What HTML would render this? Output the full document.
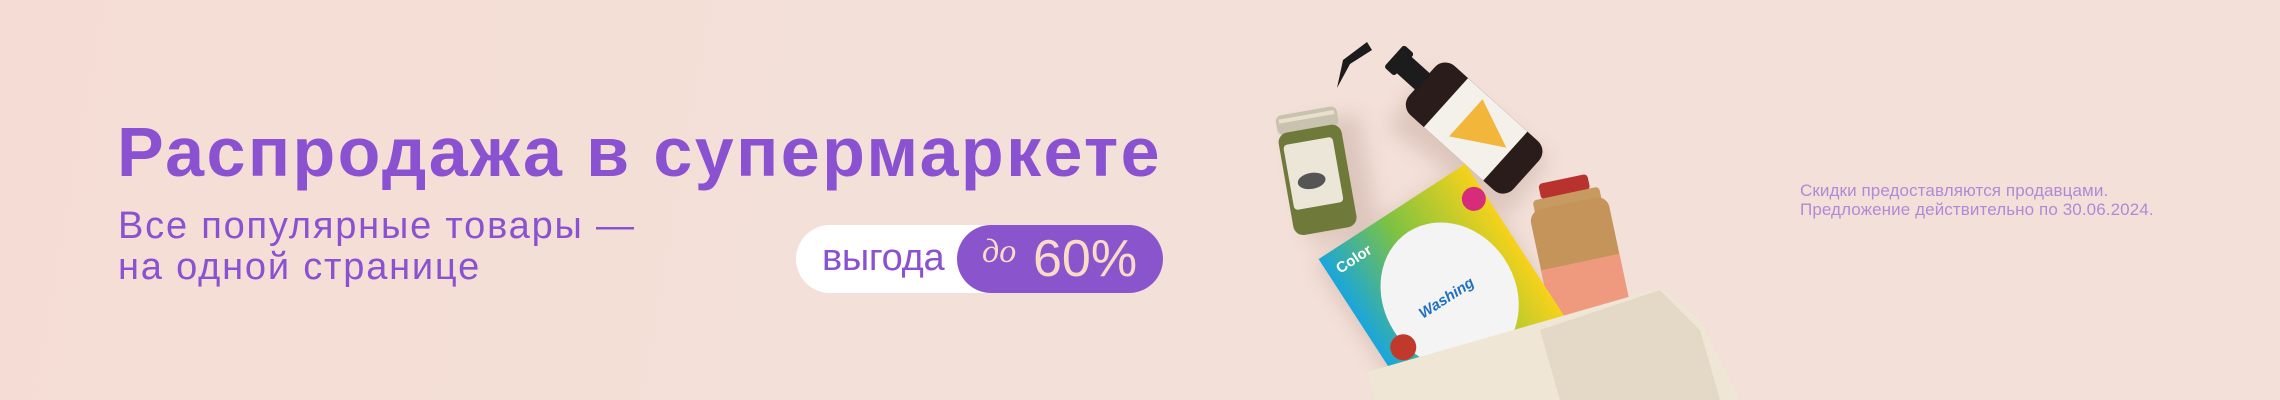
<!DOCTYPE html>
<html><head><meta charset="utf-8">
<style>
html,body{margin:0;padding:0}
body{width:2280px;height:400px;overflow:hidden;position:relative;
background:linear-gradient(100deg,#f5ddd5 0%,#f3e0d8 40%,#f3e1d9 100%);
font-family:"Liberation Sans",sans-serif}
.t{position:absolute;white-space:nowrap}
#title{left:117px;top:112px;font-size:70px;font-weight:bold;color:#8a52d0;letter-spacing:2.4px;line-height:80px}
#sub{left:118px;top:206px;font-size:38px;color:#8a52d0;line-height:41px;letter-spacing:1.8px}
#pill{position:absolute;left:796px;top:225px;width:367px;height:68px;border-radius:34px;background:#fff}
#pp{position:absolute;left:957px;top:225px;width:206px;height:68px;border-radius:34px;background:#8a55cc}
#vy{left:822px;top:236px;font-size:38px;color:#8a52d0;line-height:44px;letter-spacing:-0.3px}
#do{left:982px;top:232px;font-size:34px;color:#f8dcc6;font-family:"Liberation Serif",serif;font-style:italic;line-height:40px}
#p60{left:1033px;top:231px;font-size:52px;color:#f8dcc6;line-height:56px;letter-spacing:0px}
#disc{left:1800px;top:181px;font-size:17px;color:#b08ad6;line-height:19px;letter-spacing:0.1px}
svg{position:absolute;left:0;top:0;overflow:hidden}
</style></head><body>
<div class="t" id="title">Распродажа в супермаркете</div>
<div class="t" id="sub">Все популярные товары —<br>на одной странице</div>
<div id="pill"></div><div id="pp"></div>
<div class="t" id="vy">выгода</div>
<div class="t" id="do">до</div>
<div class="t" id="p60">60%</div>
<div class="t" id="disc">Скидки предоставляются продавцами.<br>Предложение действительно по 30.06.2024.</div>
<svg width="2280" height="400" viewBox="0 0 2280 400">
<defs><filter id="sh" x="-50%" y="-50%" width="200%" height="200%"><feGaussianBlur stdDeviation="10"/></filter>
<linearGradient id="bx" x1="0" x2="1"><stop offset="0" stop-color="#19a6dc"/><stop offset="0.45" stop-color="#7dc242"/><stop offset="1" stop-color="#f7d21a"/></linearGradient></defs>
<g opacity="0.18" filter="url(#sh)" fill="#7a5040">
<rect x="1300" y="120" width="70" height="120" transform="rotate(-10 1330 180)"/>
<rect x="1430" y="70" width="70" height="150" transform="rotate(-54 1465 140)"/>
<rect x="1350" y="200" width="180" height="180" transform="rotate(-33 1440 290)"/>
</g>
<!-- jar -->
<g transform="rotate(-10 1316 171)">
<rect x="1285" y="110" width="62" height="20" rx="6" fill="#c9c2ae"/>
<rect x="1288" y="114" width="56" height="4" fill="#e8e0cc"/>
<rect x="1284" y="128" width="64" height="104" rx="10" fill="#6f7a3a"/>
<rect x="1288" y="140" width="50" height="66" rx="4" fill="#ece6d9"/>
<ellipse cx="1310" cy="180" rx="14" ry="8" fill="#555"/>
</g>
<!-- bottle -->
<g transform="rotate(-48 1463 118)">
<rect x="1430" y="63" width="66" height="140" rx="14" fill="#2a1c1a"/>
<rect x="1430" y="95" width="66" height="80" fill="#f4f0ea"/>
<path d="M1440 120 L1490 120 L1470 170 Z" fill="#f2b63a"/>
<rect x="1452" y="35" width="22" height="30" fill="#1c1c1c"/>
<rect x="1448" y="25" width="30" height="14" rx="3" fill="#1c1c1c"/>
</g>
<path d="M1337 88 L1343 60 L1367 42 L1372 50 L1350 64 Z" fill="#1c1c1c"/>
<!-- juice -->
<g transform="rotate(-12 1590 260)">
<rect x="1555" y="175" width="50" height="16" rx="4" fill="#b8332e"/>
<rect x="1546" y="190" width="68" height="16" rx="4" fill="#c79a62"/>
<rect x="1540" y="200" width="80" height="170" rx="12" fill="#c4945a"/>
<rect x="1540" y="260" width="80" height="70" fill="#ef9a7e"/>
</g>
<!-- box -->
<g transform="rotate(-33 1440 290)">
<rect x="1355" y="198" width="175" height="190" fill="url(#bx)"/>
<ellipse cx="1445" cy="300" rx="66" ry="76" fill="#f4f4f4"/>
<circle cx="1518" cy="232" r="12" fill="#d62c7a"/>
<circle cx="1378" cy="318" r="13" fill="#c0392b"/>
<text x="1365" y="222" font-size="15" fill="#fff" font-weight="bold" font-family="Liberation Sans">Color</text>
<text x="1410" y="305" font-size="15" fill="#1f6fc2" font-weight="bold" font-style="italic" font-family="Liberation Sans">Washing</text>
</g>
<!-- bag -->
<path d="M1367 372 L1660 288 L1700 320 L1740 400 L1375 400 Z" fill="#efe6d6"/>
<path d="M1540 330 L1660 290 L1700 330 L1720 400 L1560 400 Z" fill="#e4d9c6"/>
</svg>
</body></html>
